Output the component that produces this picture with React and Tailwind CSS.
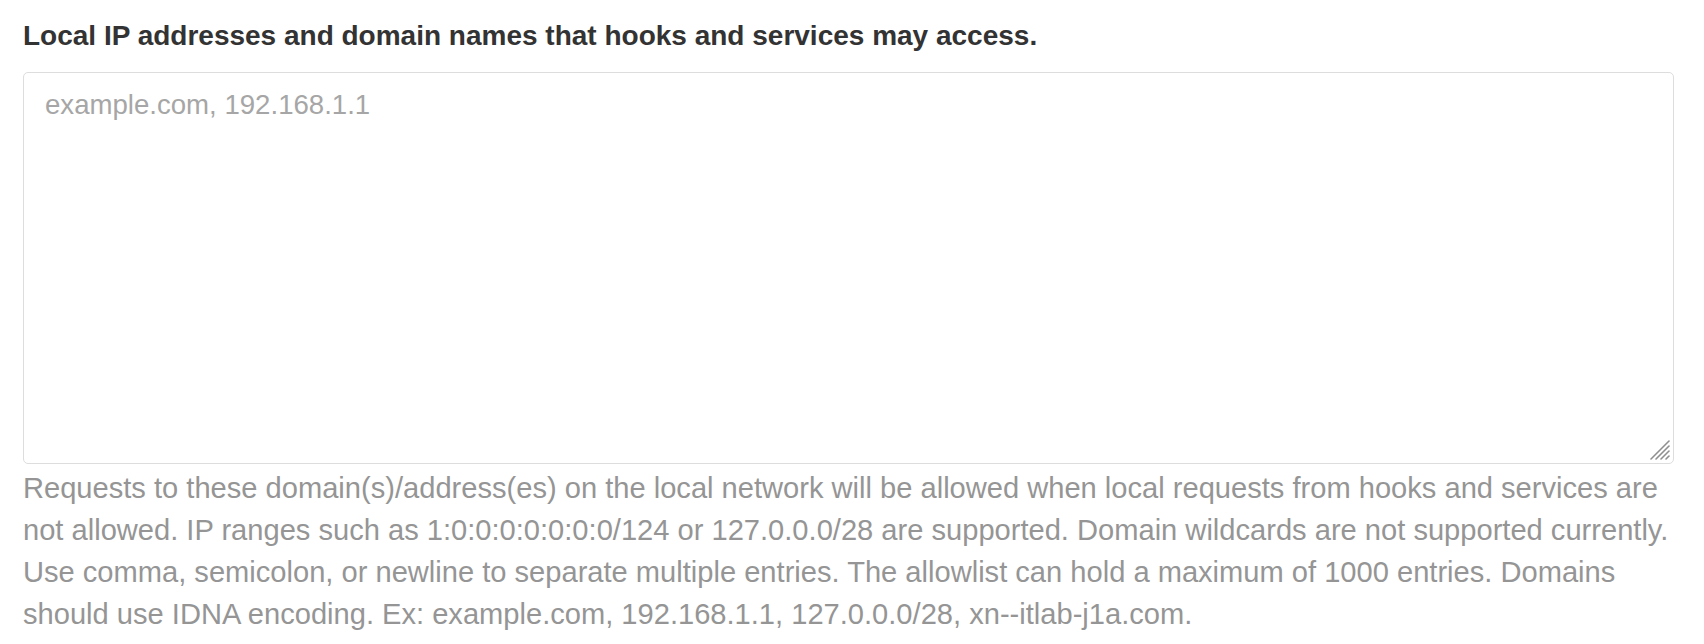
import React from 'react'

const font = { fontFamily: '"Liberation Sans", Arial, sans-serif' }

const helpLines = [
    'Requests to these domain(s)/address(es) on the local network will be allowed when local requests from hooks and services are',
    'not allowed. IP ranges such as 1:0:0:0:0:0:0:0/124 or 127.0.0.0/28 are supported. Domain wildcards are not supported currently.',
    'Use comma, semicolon, or newline to separate multiple entries. The allowlist can hold a maximum of 1000 entries. Domains',
    'should use IDNA encoding. Ex: example.com, 192.168.1.1, 127.0.0.0/28, xn--itlab-j1a.com.',
]

const ResizeGrip = () => (
    <svg className="absolute right-[3px] bottom-[3px] pointer-events-none" width="24" height="24" viewBox="0 0 24 24">
        <g stroke="#8f8f8f" strokeWidth="1.6" strokeLinecap="round">
            <line x1="22" y1="4" x2="4" y2="22" />
            <line x1="22" y1="9" x2="9" y2="22" />
            <line x1="22" y1="14" x2="14" y2="22" />
            <line x1="22" y1="19" x2="19" y2="22" />
        </g>
    </svg>
)

export default function App() {
    return (
        <div className="bg-white w-[1704px] h-[644px] px-[23px] pt-[20px]" style={font}>
            <label className="block text-[28px] leading-[32px] font-bold text-[#333333]">
                Local IP addresses and domain names that hooks and services may access.
            </label>

            {/* allowlist textarea */}
            <div className="relative mt-[20px] w-[1651px]">
                <textarea
                    className="block w-full h-[392px] resize-none rounded-[5px] border border-[#dddddd] bg-white px-[21px] pt-[16px] text-[27.6px] leading-[32px] text-[#333333] placeholder:text-[#a6a6a6] outline-none"
                    style={font}
                    placeholder="example.com, 192.168.1.1"
                />
                <ResizeGrip />
            </div>

            <p className="mt-[3px] text-[29.1px] leading-[42px] text-[#959595]">
                {helpLines.map((line) => (
                    <span key={line} className="block whitespace-nowrap">{line}</span>
                ))}
            </p>
        </div>
    )
}
